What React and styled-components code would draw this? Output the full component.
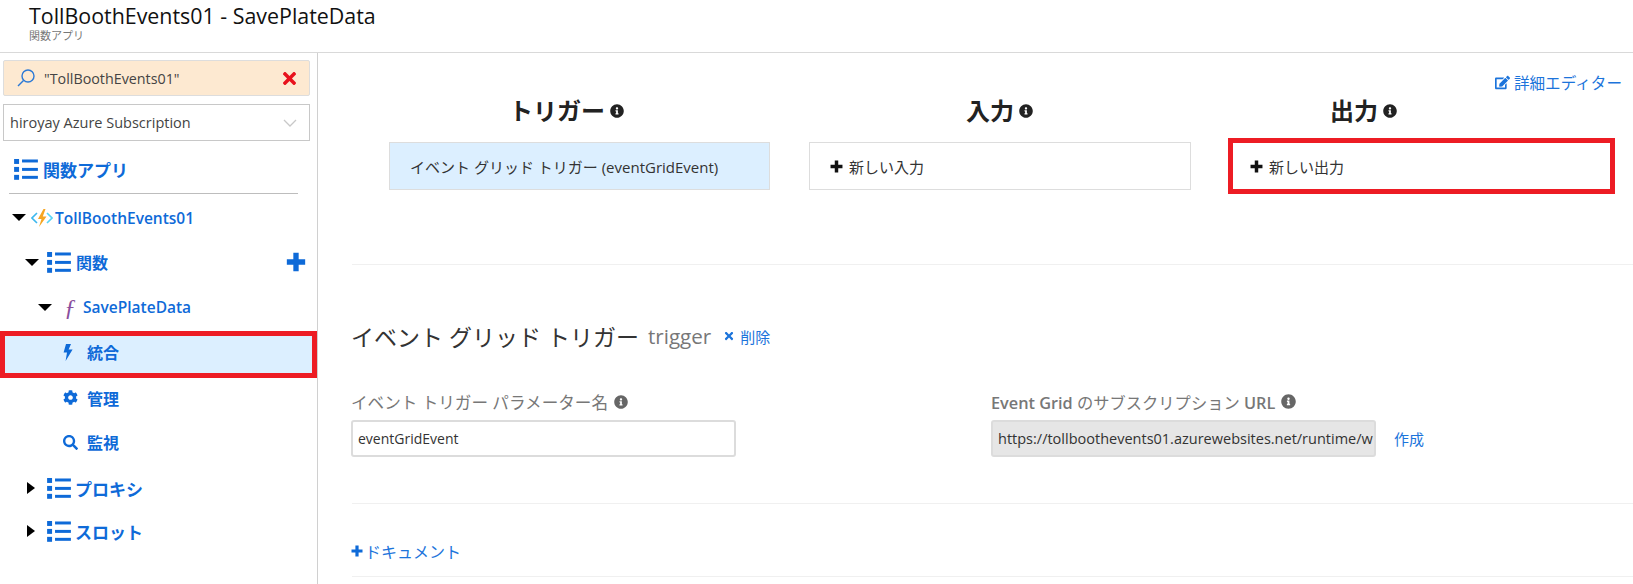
import React from "react";
import styled, { createGlobalStyle } from "styled-components";
import { FaCog, FaEdit, FaInfoCircle, FaSearch, FaTimes } from "react-icons/fa";

const FONT = `"Open Sans", "Noto Sans CJK JP", sans-serif`;
const BLUE = "#0e6ad8";
const LINK = "#1c74db";
const RED = "#ed1c24";

const Global = createGlobalStyle`
  html, body { margin: 0; padding: 0; background: #fff; }
  body { font-family: ${FONT}; color: #333; overflow: hidden; }
  * { box-sizing: border-box; }
`;

const Page = styled.div`
  width: 1633px;
  height: 584px;
  display: flex;
  flex-direction: column;
  overflow: hidden;
`;

const Header = styled.header`
  height: 53px;
  padding: 3px 0 0 29px;
  border-bottom: 1px solid #d9d9d9;
`;

const Title = styled.div`
  font-size: 21.4px;
  line-height: 26px;
  color: #111;
`;

const Subtitle = styled.div`
  font-size: 11px;
  line-height: 14px;
  color: #777;
`;

const Body = styled.div`
  flex: 1;
  display: flex;
  min-height: 0;
`;

const Sidebar = styled.aside`
  width: 318px;
  flex-shrink: 0;
  border-right: 1px solid #d0d0d0;
  padding-top: 7px;
`;

const SearchBox = styled.div`
  width: 307px;
  height: 36px;
  margin-left: 3px;
  display: flex;
  align-items: center;
  padding: 0 10px 0 12px;
  background: #fde9d1;
  border: 1px solid #ddd;
  border-radius: 2px;
  font-size: 14.3px;
  color: #444;
`;

const SearchText = styled.span`
  flex: 1;
  margin-left: 8px;
`;

const SelectBox = styled.div`
  width: 307px;
  height: 37px;
  margin: 8px 0 0 3px;
  display: flex;
  align-items: center;
  justify-content: space-between;
  padding: 0 12px 0 6px;
  border: 1px solid #c8c8c8;
  font-size: 14.5px;
  color: #444;
`;

const TreeHead = styled.div`
  height: 48px;
  margin: 4px 0 0 14px;
  display: flex;
  align-items: center;
  gap: 5px;
  font-size: 17px;
  font-weight: 600;
  color: ${BLUE};
`;

const Rule = styled.div`
  width: 289px;
  height: 1px;
  margin: 0 0 0 9px;
  background: #bdbdbd;
`;

const Row = styled.div`
  height: ${(p) => p.$height}px;
  padding-left: ${(p) => p.$indent}px;
  padding-bottom: ${(p) => p.$lift || 0}px;
  display: flex;
  align-items: center;
  gap: ${(p) => p.$gap || 4}px;
  font-size: ${(p) => p.$size || 16}px;
  font-weight: ${(p) => p.$weight || 600};
  color: ${BLUE};
  ${(p) =>
    p.$active &&
    `
    width: 317px;
    background: #dcefff;
    outline: 5px solid ${RED};
    outline-offset: -5px;
  `}
`;

const Spacer = styled.span`
  flex: 1;
`;

const Caret = styled.span`
  width: 0;
  height: 0;
  flex-shrink: 0;
  margin-right: 3px;
  ${(p) =>
    p.$open
      ? `
    border-left: 7px solid transparent;
    border-right: 7px solid transparent;
    border-top: 7px solid #000;
  `
      : `
    margin-left: 2px;
    border-top: 6px solid transparent;
    border-bottom: 6px solid transparent;
    border-left: 8px solid #000;
    margin-right: 8px;
  `}
`;

const IconSlot = styled.span`
  width: 20px;
  display: inline-flex;
  align-items: center;
  flex-shrink: 0;
  font-size: 15px;
`;

const FnGlyph = styled.span`
  width: 22px;
  margin-right: -2px;
  font-family: "Liberation Serif", serif;
  font-style: italic;
  font-size: 24px;
  line-height: 24px;
  font-weight: 400;
  color: #8a4f9e;
  text-align: center;
  flex-shrink: 0;
`;

const Main = styled.main`
  flex: 1;
  min-width: 0;
`;

const EditorRow = styled.div`
  height: 40px;
  padding: 18px 11px 0 0;
  display: flex;
  justify-content: flex-end;
  align-items: center;
  gap: 4px;
  font-size: 15.6px;
  color: ${LINK};
`;

const Columns = styled.div`
  display: flex;
  padding-left: 71px;
`;

const Column = styled.div`
  width: ${(p) => p.$width}px;
  margin-right: ${(p) => p.$after || 0}px;
`;

const ColumnHead = styled.div`
  height: 49px;
  padding: 0 0 17px ${(p) => p.$indent}px;
  display: flex;
  align-items: center;
  gap: 5px;
  font-size: 24px;
  font-weight: 600;
  color: #222;
`;

const HeadInfo = styled(FaInfoCircle)`
  margin-top: 4px;
  font-size: 14px;
`;

const BindingBox = styled.div`
  height: 48px;
  display: flex;
  align-items: center;
  gap: 6px;
  padding-left: ${(p) => (p.$flagged ? 18 : 20)}px;
  font-size: 15px;
  color: #333;
  background: ${(p) => (p.$selected ? "#dcefff" : "#fff")};
  border: 1px solid #ddd;
  ${(p) => p.$flagged && `outline: 5px solid ${RED}; outline-offset: -1px; border: none;`}
`;

const Divider = styled.div`
  height: 1px;
  margin: ${(p) => p.$top}px 0 0 34px;
  background: #f0f0f0;
`;

const DetailHead = styled.div`
  margin: 53px 0 0 33px;
  display: flex;
  align-items: center;
  height: 36px;
  font-size: 23px;
  color: #333;
`;

const TypeTag = styled.span`
  font-size: 20.6px;
  color: #777;
  margin-left: 9px;
`;

const Remove = styled.span`
  margin-left: 12px;
  display: inline-flex;
  align-items: center;
  gap: 5px;
  font-size: 15px;
  color: ${LINK};
`;

const Fields = styled.div`
  display: flex;
  margin: 38px 0 0 33px;
`;

const Field = styled.div`
  width: ${(p) => p.$width}px;
`;

const FieldLabel = styled.div`
  height: 19px;
  display: flex;
  align-items: center;
  gap: 6px;
  font-size: ${(p) => p.$size}px;
  color: #777;
`;

const LabelStrong = styled.span`
  font-weight: 600;
`;

const LabelText = styled.span`
  white-space: pre;
`;

const InputRow = styled.div`
  display: flex;
  align-items: center;
  margin-top: 9px;
  gap: 18px;
  font-size: 15px;
  color: ${LINK};
`;

const TextBox = styled.div`
  width: 385px;
  height: 37px;
  flex-shrink: 0;
  padding-left: 5px;
  display: flex;
  align-items: center;
  white-space: nowrap;
  font-size: ${(p) => p.$size || 14}px;
  color: #333;
  background: ${(p) => (p.$disabled ? "#e6e6e6" : "#fff")};
  border: 2px solid #dcdcdc;
  border-radius: 3px;
`;

const DocLink = styled.div`
  height: 22px;
  margin: 36px 0 0 33px;
  display: flex;
  align-items: center;
  gap: 2px;
  font-size: 16px;
  color: ${LINK};
`;

const ListIcon = ({ size = 24 }) => (
  <svg width={size} height={size * 0.95} viewBox="0 0 24 23" fill={BLUE} style={{ flexShrink: 0 }}>
    <rect x="0" y="1" width="5" height="5" />
    <rect x="0" y="9" width="5" height="5" />
    <rect x="0" y="17" width="5" height="5" />
    <rect x="8" y="1.5" width="16" height="3" />
    <rect x="8" y="10" width="16" height="3" />
    <rect x="8" y="18" width="16" height="3" />
  </svg>
);

const PlusIcon = ({ size, color = BLUE, style }) => (
  <svg width={size} height={size} viewBox="0 0 12 12" fill={color} style={{ flexShrink: 0, ...style }}>
    <path d="M4.4 0.5 H7.6 V4.4 H11.5 V7.6 H7.6 V11.5 H4.4 V7.6 H0.5 V4.4 H4.4 Z" />
  </svg>
);

const FunctionLogo = () => (
  <svg width="22" height="20" viewBox="0 0 22 20" style={{ flexShrink: 0 }}>
    <path d="M6 5 L1 10 L6 15" fill="none" stroke="#3db8ee" strokeWidth="1.6" />
    <path d="M16 5 L21 10 L16 15" fill="none" stroke="#59d4f5" strokeWidth="1.6" />
    <path d="M12.5 1 L7 11 L10.5 11 L8 19 L15.5 8.5 L11.8 8.5 L14.5 1 Z" fill="#f6a623" />
  </svg>
);

const BoltIcon = () => (
  <svg width="10" height="17" viewBox="0 0 10 17" fill={BLUE}>
    <path d="M3 0 H8 L5.6 5.5 H9.6 L2.6 17 L4 8.5 H0.6 Z" />
  </svg>
);

const Lens = () => (
  <svg width="20" height="20" viewBox="0 0 20 20" fill="none" stroke="#2b79d6" strokeWidth="1.4">
    <circle cx="12" cy="8" r="6" />
    <path d="M7.5 12.5 L2 18" />
  </svg>
);

const Chevron = () => (
  <svg width="14" height="8" viewBox="0 0 14 8" fill="none" stroke="#c8c8c8" strokeWidth="1.3">
    <path d="M1 1 L7 7 L13 1" />
  </svg>
);

const App = () => (
  <Page>
    <Global />
    <Header>
      <Title>TollBoothEvents01 - SavePlateData</Title>
      <Subtitle>関数アプリ</Subtitle>
    </Header>
    <Body>
      <Sidebar>
        <SearchBox>
          <Lens />
          <SearchText>"TollBoothEvents01"</SearchText>
          <FaTimes color="#e8121d" size={19} />
        </SearchBox>
        <SelectBox>
          hiroyay Azure Subscription
          <Chevron />
        </SelectBox>
        <TreeHead>
          <ListIcon />
          関数アプリ
        </TreeHead>
        <Rule />
        <Row $indent={12} $height={47} $size={15.5} $gap={2}>
          <Caret $open />
          <FunctionLogo />
          TollBoothEvents01
        </Row>
        <Row $indent={25} $height={42} $gap={5}>
          <Caret $open />
          <ListIcon />
          関数
          <Spacer />
          <PlusIcon size={20} style={{ marginRight: 11 }} />
        </Row>
        <Row $indent={38} $height={48} $size={15.5} $gap={0}>
          <Caret $open />
          <FnGlyph>ƒ</FnGlyph>
          SavePlateData
        </Row>
        <Row $indent={63} $active $height={47} $lift={5}>
          <IconSlot>
            <BoltIcon />
          </IconSlot>
          統合
        </Row>
        <Row $indent={63} $height={44} $lift={5}>
          <IconSlot>
            <FaCog />
          </IconSlot>
          管理
        </Row>
        <Row $indent={63} $height={45} $lift={5}>
          <IconSlot>
            <FaSearch />
          </IconSlot>
          監視
        </Row>
        <Row $indent={25} $height={44} $lift={2} $size={17} $gap={4}>
          <Caret />
          <ListIcon />
          プロキシ
        </Row>
        <Row $indent={25} $height={44} $lift={4} $size={17} $gap={4}>
          <Caret />
          <ListIcon />
          スロット
        </Row>
      </Sidebar>
      <Main>
        <EditorRow>
          <FaEdit size={15} />
          詳細エディター
        </EditorRow>
        <Columns>
          <Column $width={381} $after={39}>
            <ColumnHead $indent={120}>
              トリガー
              <HeadInfo />
            </ColumnHead>
            <BindingBox $selected>イベント グリッド トリガー (eventGridEvent)</BindingBox>
          </Column>
          <Column $width={382} $after={41}>
            <ColumnHead $indent={157}>
              入力
              <HeadInfo />
            </ColumnHead>
            <BindingBox>
              <PlusIcon size={13} color="#111" />
              新しい入力
            </BindingBox>
          </Column>
          <Column $width={379}>
            <ColumnHead $indent={98}>
              出力
              <HeadInfo />
            </ColumnHead>
            <BindingBox $flagged>
              <PlusIcon size={13} color="#111" />
              新しい出力
            </BindingBox>
          </Column>
        </Columns>
        <Divider $top={74} />
        <DetailHead>
          イベント グリッド トリガー
          <TypeTag>trigger</TypeTag>
          <Remove>
            <FaTimes size={12} />
            削除
          </Remove>
        </DetailHead>
        <Fields>
          <Field $width={640}>
            <FieldLabel $size={16.6}>
              イベント トリガー パラメーター名
              <FaInfoCircle size={14} color="#666" />
            </FieldLabel>
            <InputRow>
              <TextBox>eventGridEvent</TextBox>
            </InputRow>
          </Field>
          <Field $width={560}>
            <FieldLabel $size={16.3}>
              <LabelText>
                <LabelStrong>Event Grid</LabelStrong> のサブスクリプション <LabelStrong>URL</LabelStrong>
              </LabelText>
              <FaInfoCircle size={15} color="#666" />
            </FieldLabel>
            <InputRow>
              <TextBox $disabled $size={14.5}>
                https://tollboothevents01.azurewebsites.net/runtime/w
              </TextBox>
              作成
            </InputRow>
          </Field>
        </Fields>
        <Divider $top={46} />
        <DocLink>
          <PlusIcon size={12} />
          ドキュメント
        </DocLink>
        <Divider $top={14} />
      </Main>
    </Body>
  </Page>
);

export default App;
